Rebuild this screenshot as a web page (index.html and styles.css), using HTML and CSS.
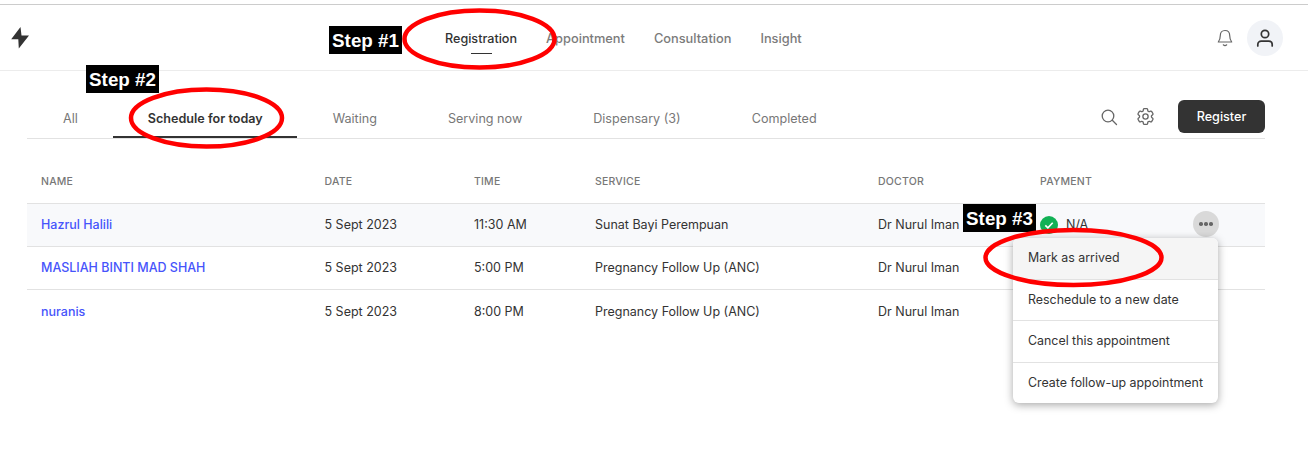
FILE: index.html
```html
<!DOCTYPE html>
<html lang="en">
<head>
    <meta charset="UTF-8">
    <meta name="viewport" content="width=device-width, initial-scale=1.0">
    <title>Registration</title>
    <link rel="stylesheet" href="styles.css">
</head>
<body>
    <header class="topbar">
        <svg class="logo" width="20" height="24" viewBox="0 0 20 24"><path d="M10.500 1 1.200 13.200H8.300L8.800 22.500 19 9.500H11.500Z" fill="#333"/></svg>
        <nav class="main-nav">
            <a class="nav-item active">Registration</a>
            <a class="nav-item">Appointment</a>
            <a class="nav-item">Consultation</a>
            <a class="nav-item">Insight</a>
        </nav>
        <div class="top-actions">
            <svg width="20" height="20" viewBox="0 0 20 20" fill="none" stroke="#666" stroke-width="1.200" stroke-linecap="round" stroke-linejoin="round"><path d="M10 2.500c-3 0-4.700 2.200-4.700 5 0 3.500-.8 5-2 6.500h13.400c-1.200-1.500-2-3-2-6.500 0-2.800-1.700-5-4.700-5z"/><path d="M8.300 16.800c.8.700 2.600.7 3.400 0"/></svg>
            <div class="avatar">
                <svg width="20" height="20" viewBox="0 0 20 20" fill="none" stroke="#333" stroke-width="1.700" stroke-linecap="round"><circle cx="10" cy="6" r="3.700"/><path d="M2.800 18v-1.500c0-2 1.500-3.300 3.500-3.300h7.400c2 0 3.500 1.300 3.500 3.300V18"/></svg>
            </div>
        </div>
    </header>

    <main class="content">
        <div class="tabs-row">
            <div class="tabs">
                <a class="tab">All</a>
                <a class="tab active">Schedule for today</a>
                <a class="tab">Waiting</a>
                <a class="tab">Serving now</a>
                <a class="tab">Dispensary (3)</a>
                <a class="tab">Completed</a>
            </div>
            <div class="tab-actions">
                <svg width="18" height="18" viewBox="0 0 18 18" fill="none" stroke="#666" stroke-width="1.300" stroke-linecap="round"><circle cx="8" cy="8" r="5.800"/><path d="m12.300 12.300 4.200 4.200"/></svg>
                <svg class="gear" width="21" height="21" viewBox="0 0 24 24" fill="none" stroke="#666" stroke-width="1.500" stroke-linejoin="round"><path d="M9.594 3.940c.09-.542.56-.94 1.110-.94h2.593c.55 0 1.020.398 1.110.94l.213 1.281c.063.374.313.686.645.870.074.04.147.083.220.127.324.196.72.257 1.075.124l1.217-.456a1.125 1.125 0 011.370.49l1.296 2.247a1.125 1.125 0 01-.26 1.431l-1.003.827c-.293.24-.438.613-.431.992a6.759 6.759 0 010 .255c-.007.378.138.75.43.99l1.005.828c.424.35.534.954.26 1.430l-1.298 2.247a1.125 1.125 0 01-1.369.491l-1.217-.456c-.355-.133-.75-.072-1.076.124a6.570 6.570 0 01-.22.128c-.331.183-.581.495-.644.869l-.213 1.280c-.09.543-.56.941-1.110.941h-2.594c-.55 0-1.020-.398-1.110-.94l-.213-1.281c-.062-.374-.312-.686-.644-.87a6.520 6.520 0 01-.22-.127c-.325-.196-.72-.257-1.076-.124l-1.217.456a1.125 1.125 0 01-1.369-.49l-1.297-2.247a1.125 1.125 0 01.26-1.431l1.004-.827c.292-.24.437-.613.43-.992a6.932 6.932 0 010-.255c.007-.378-.138-.75-.43-.99l-1.004-.828a1.125 1.125 0 01-.26-1.430l1.297-2.247a1.125 1.125 0 011.370-.491l1.216.456c.356.133.751.072 1.076-.124.072-.044.146-.087.22-.128.332-.183.582-.495.644-.869l.214-1.281z"/><circle cx="12" cy="12" r="3"/></svg>
                <button class="btn">Register</button>
            </div>
        </div>

        <div class="table">
            <div class="row head">
                <span>NAME</span><span>DATE</span><span>TIME</span><span>SERVICE</span><span>DOCTOR</span><span>PAYMENT</span>
            </div>
            <div class="row selected">
                <a class="name">Hazrul Halili</a><span>5 Sept 2023</span><span>11:30 AM</span><span>Sunat Bayi Perempuan</span><span>Dr Nurul Iman</span>
                <span class="payment">
                    <svg width="18" height="18" viewBox="0 0 18 18"><circle cx="9" cy="9" r="9" fill="#12b155"/><path d="m5.300 9.300 2.600 2.500 4.800-5" fill="none" stroke="#fff" stroke-width="1.600"/></svg>
                    N/A
                </span>
                <span class="more"><i></i><i></i><i></i></span>
            </div>
            <div class="row">
                <a class="name">MASLIAH BINTI MAD SHAH</a><span>5 Sept 2023</span><span>5:00 PM</span><span>Pregnancy Follow Up (ANC)</span><span>Dr Nurul Iman</span>
            </div>
            <div class="row last">
                <a class="name">nuranis</a><span>5 Sept 2023</span><span>8:00 PM</span><span>Pregnancy Follow Up (ANC)</span><span>Dr Nurul Iman</span>
            </div>
        </div>
    </main>

    <ul class="menu">
        <li class="hover">Mark as arrived</li>
        <li>Reschedule to a new date</li>
        <li>Cancel this appointment</li>
        <li>Create follow-up appointment</li>
    </ul>

    <!-- tutorial marks drawn on top of the screenshot -->
    <span class="step step-1">Step #1</span>
    <span class="step step-2">Step #2</span>
    <span class="step step-3">Step #3</span>
    <svg class="marks" width="1308" height="451" fill="none" stroke="#f00" stroke-width="4.500">
        <ellipse cx="479.500" cy="39" rx="75" ry="28.500"/>
        <ellipse cx="206.500" cy="118" rx="75.500" ry="28.500"/>
        <ellipse cx="1073.500" cy="257.500" rx="88" ry="27.500"/>
    </svg>
</body>
</html>
```

FILE: styles.css
```css
* {
    box-sizing: border-box;
}
html, body {
    height: 451px;
    overflow: hidden;
}
body {
    position: relative;
    margin: 0;
    padding-top: 4px;
    background-color: #fff;
    color: #333;
    font-family: Inter, "Liberation Sans", sans-serif;
    font-size: 12.6px;
}
.topbar {
    display: flex;
    align-items: center;
    height: 67px;
    padding: 0 25px 0 10px;
    border-top: 1px solid #ccc;
    border-bottom: 1px solid #ececec;
}
.logo {
    flex: none;
}
.main-nav {
    display: flex;
    gap: 29px;
    margin-top: 2px;
    margin-left: 415px;
    font-size: 12.8px;
}
.nav-item {
    position: relative;
    color: #7b7b7b;
    font-weight: 500;
}
.nav-item.active {
    color: #333;
    font-size: 12.6px;
}
.nav-item.active::after {
    content: '';
    position: absolute;
    left: 26px;
    right: 25px;
    bottom: -8px;
    height: 1px;
    background: #333;
}
.top-actions {
    display: flex;
    align-items: center;
    gap: 12px;
    margin-left: auto;
}
.avatar {
    display: flex;
    align-items: center;
    justify-content: center;
    width: 36px;
    height: 36px;
    border-radius: 50%;
    background: #f1f3f7;
}
.content {
    padding: 0 43px 0 27px;
}
.tabs-row {
    display: flex;
    align-items: flex-end;
    justify-content: space-between;
    height: 68px;
    border-bottom: 1px solid #e2e2e2;
}
.tabs {
    display: flex;
}
.tab {
    height: 38px;
    padding: 11px 35.500px 0;
    color: #777;
}
.tab:first-child {
    padding-left: 36px;
}
.tab.active {
    padding: 11px 34.500px 0;
    border-bottom: 2px solid #333;
    color: #333;
    font-weight: 600;
}
.tab-actions {
    display: flex;
    align-items: center;
    gap: 19px;
    height: 33px;
    margin-bottom: 5px;
}
.gear {
    margin: 0 0 0 -2px;
}
.btn {
    width: 87px;
    height: 33px;
    margin-left: 3px;
    border: none;
    border-radius: 6px;
    background: #333;
    color: #fff;
    font: 500 12.6px Inter, "Liberation Sans", sans-serif;
}
.row {
    display: grid;
    grid-template-columns: 283.500px 149.500px 121px 283px 162px 153px 1fr;
    align-items: center;
    height: 43px;
    padding-left: 14px;
    padding-bottom: 2px;
    border-bottom: 1px solid #e2e2e2;
    font-size: 12.5px;
}
.row.head {
    height: 65px;
    padding-top: 20px;
    padding-bottom: 0;
    color: #777;
    font-size: 10.500px;
    font-weight: 500;
    letter-spacing: .2px;
}
.row.selected {
    background: #f8f9fb;
}
.row.last {
    padding-bottom: 0;
    border-bottom: none;
}
.name {
    color: #4654fb;
    font-weight: 500;
}
.payment {
    display: flex;
    align-items: center;
    gap: 8px;
}
.payment svg {
    margin-top: 2px;
}
.more {
    display: flex;
    align-items: center;
    justify-content: center;
    gap: 1.500px;
    width: 26px;
    height: 26px;
    border-radius: 50%;
    background: #d9d9d9;
}
.more i {
    width: 3.500px;
    height: 3.500px;
    border-radius: 50%;
    background: #666;
}
.menu {
    position: absolute;
    left: 1013px;
    top: 238px;
    width: 205px;
    margin: 0;
    padding: 0;
    list-style: none;
    border-radius: 6px;
    background: #fff;
    box-shadow: 0 2px 8px rgba(0, 0, 0, 0.35);
    font-size: 12.4px;
    overflow: hidden;
}
.menu li {
    height: 41.400px;
    padding: 12px 0 0 15px;
    border-top: 1px solid #e2e2e2;
}
.menu li:first-child {
    height: 41px;
    border-top: none;
}
.menu li.hover {
    background: #f5f5f5;
}
.step {
    position: absolute;
    width: 73px;
    height: 28px;
    background: #000;
    color: #fff;
    font: bold 18.800px/30px "Liberation Sans", sans-serif;
    text-align: center;
}
.step-1 {
    left: 329px;
    top: 26px;
}
.step-2 {
    left: 86px;
    top: 65px;
}
.step-3 {
    left: 963px;
    top: 204px;
}
.marks {
    position: absolute;
    left: 0;
    top: 0;
    pointer-events: none;
}
```
